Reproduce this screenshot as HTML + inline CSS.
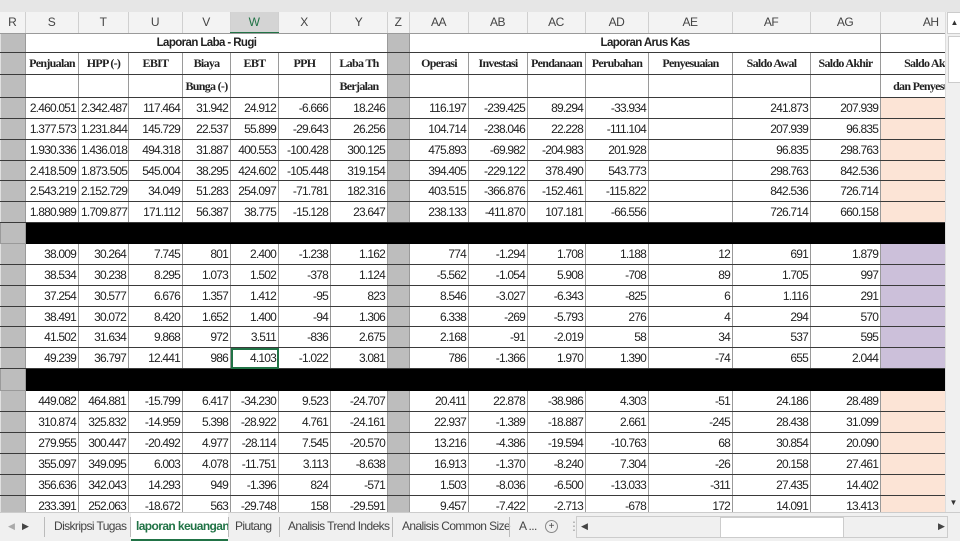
<!DOCTYPE html>
<html><head><meta charset="utf-8"><style>
body{margin:0;width:960px;height:540px;overflow:hidden;background:#e6e6e6;position:relative;font-family:"Liberation Sans",sans-serif}
table{border-collapse:collapse;table-layout:fixed;position:absolute;left:0;width:945px}
td{padding:0 2px;overflow:hidden;white-space:nowrap;font-size:12px;letter-spacing:-0.8px;color:#222}
#ch{top:12px}
#ch td{height:20px;background:#f3f3f3;text-align:center;border-right:1px solid #d0d0d0;border-bottom:1px solid #bbb;color:#444;font-size:12px;letter-spacing:-0.5px}
#ch td.sel{background:#d4d4d4;border-bottom:2px solid #217346;color:#217346}
#dt{top:33px}
#dt td{border:1px solid #9a9a9a;border-bottom:1px solid #3a3a3a;text-align:right;background:#fff}
#dt td.g{background:#bdbdbd;border-left:1px solid #e0e0e0}
#dt tr.h td{font-family:"Liberation Serif",serif;font-weight:bold;font-size:12px;text-align:center;letter-spacing:-0.7px}
#dt tr.t td{font-family:"Liberation Sans",sans-serif;font-size:11.5px;font-weight:bold;letter-spacing:-0.6px}
#dt tr.blk td{background:#000;border-color:#000}
#dt tr.blk td.g{background:#bdbdbd;border-color:#9a9a9a}
#dt td.p{background:#fce4d6}
#dt td.l{background:#ccc0da}
#dt td.s{outline:2px solid #217346;outline-offset:-2px}
#vs{position:absolute;left:945px;top:12px;width:15px;height:500px;background:#f0f0f0;border-left:1px solid #ddd}
#tabs{position:absolute;left:0;top:512px;width:960px;height:28px;background:#f0f0f0;border-top:1px solid #ccc;font-size:12px;letter-spacing:-0.6px;color:#444}
#tabs span{position:absolute;top:6px}
.sep{position:absolute;top:4px;width:1px;height:20px;background:#bbb}
</style></head><body>
<table id="ch"><colgroup><col style="width:25px"><col style="width:53px"><col style="width:50px"><col style="width:54px"><col style="width:48px"><col style="width:48px"><col style="width:52px"><col style="width:57px"><col style="width:22px"><col style="width:59px"><col style="width:59px"><col style="width:58px"><col style="width:63px"><col style="width:84px"><col style="width:78px"><col style="width:70px"><col style="width:65px"></colgroup>
<tr><td>R</td><td>S</td><td>T</td><td>U</td><td>V</td><td class="sel">W</td><td>X</td><td>Y</td><td>Z</td><td>AA</td><td>AB</td><td>AC</td><td>AD</td><td>AE</td><td>AF</td><td>AG</td><td style="text-align:right;padding-right:6px">AH</td></tr></table>
<table id="dt"><colgroup><col style="width:25px"><col style="width:53px"><col style="width:50px"><col style="width:54px"><col style="width:48px"><col style="width:48px"><col style="width:52px"><col style="width:57px"><col style="width:22px"><col style="width:59px"><col style="width:59px"><col style="width:58px"><col style="width:63px"><col style="width:84px"><col style="width:78px"><col style="width:70px"><col style="width:65px"></colgroup>
<tr class="h t" style="height:19px"><td class="g"></td><td colspan="7">Laporan Laba - Rugi</td><td class="g"></td><td colspan="7">Laporan Arus Kas</td><td></td></tr>
<tr class="h" style="height:22px"><td class="g"></td><td>Penjualan</td><td>HPP (-)</td><td>EBIT</td><td>Biaya</td><td>EBT</td><td>PPH</td><td>Laba Th</td><td class="g"></td><td>Operasi</td><td>Investasi</td><td>Pendanaan</td><td>Perubahan</td><td>Penyesuaian</td><td>Saldo Awal</td><td>Saldo Akhir</td><td style="text-align:left;padding-left:23px">Saldo Akhir</td></tr>
<tr class="h" style="height:23px"><td class="g"></td><td></td><td></td><td></td><td>Bunga (-)</td><td></td><td></td><td>Berjalan</td><td class="g"></td><td></td><td></td><td></td><td></td><td></td><td></td><td></td><td style="text-align:left;padding-left:12px">dan Penyesuaian</td></tr>
<tr style="height:21px"><td class="g"></td><td>2.460.051</td><td>2.342.487</td><td>117.464</td><td>31.942</td><td>24.912</td><td>-6.666</td><td>18.246</td><td class="g"></td><td>116.197</td><td>-239.425</td><td>89.294</td><td>-33.934</td><td></td><td>241.873</td><td>207.939</td><td class="p"></td></tr>
<tr style="height:21px"><td class="g"></td><td>1.377.573</td><td>1.231.844</td><td>145.729</td><td>22.537</td><td>55.899</td><td>-29.643</td><td>26.256</td><td class="g"></td><td>104.714</td><td>-238.046</td><td>22.228</td><td>-111.104</td><td></td><td>207.939</td><td>96.835</td><td class="p"></td></tr>
<tr style="height:21px"><td class="g"></td><td>1.930.336</td><td>1.436.018</td><td>494.318</td><td>31.887</td><td>400.553</td><td>-100.428</td><td>300.125</td><td class="g"></td><td>475.893</td><td>-69.982</td><td>-204.983</td><td>201.928</td><td></td><td>96.835</td><td>298.763</td><td class="p"></td></tr>
<tr style="height:20px"><td class="g"></td><td>2.418.509</td><td>1.873.505</td><td>545.004</td><td>38.295</td><td>424.602</td><td>-105.448</td><td>319.154</td><td class="g"></td><td>394.405</td><td>-229.122</td><td>378.490</td><td>543.773</td><td></td><td>298.763</td><td>842.536</td><td class="p"></td></tr>
<tr style="height:21px"><td class="g"></td><td>2.543.219</td><td>2.152.729</td><td>34.049</td><td>51.283</td><td>254.097</td><td>-71.781</td><td>182.316</td><td class="g"></td><td>403.515</td><td>-366.876</td><td>-152.461</td><td>-115.822</td><td></td><td>842.536</td><td>726.714</td><td class="p"></td></tr>
<tr style="height:21px"><td class="g"></td><td>1.880.989</td><td>1.709.877</td><td>171.112</td><td>56.387</td><td>38.775</td><td>-15.128</td><td>23.647</td><td class="g"></td><td>238.133</td><td>-411.870</td><td>107.181</td><td>-66.556</td><td></td><td>726.714</td><td>660.158</td><td class="p"></td></tr>
<tr class="blk" style="height:21px"><td class="g"></td><td colspan="16"></td></tr>
<tr style="height:21px"><td class="g"></td><td>38.009</td><td>30.264</td><td>7.745</td><td>801</td><td>2.400</td><td>-1.238</td><td>1.162</td><td class="g"></td><td>774</td><td>-1.294</td><td>1.708</td><td>1.188</td><td>12</td><td>691</td><td>1.879</td><td class="l"></td></tr>
<tr style="height:21px"><td class="g"></td><td>38.534</td><td>30.238</td><td>8.295</td><td>1.073</td><td>1.502</td><td>-378</td><td>1.124</td><td class="g"></td><td>-5.562</td><td>-1.054</td><td>5.908</td><td>-708</td><td>89</td><td>1.705</td><td>997</td><td class="l"></td></tr>
<tr style="height:21px"><td class="g"></td><td>37.254</td><td>30.577</td><td>6.676</td><td>1.357</td><td>1.412</td><td>-95</td><td>823</td><td class="g"></td><td>8.546</td><td>-3.027</td><td>-6.343</td><td>-825</td><td>6</td><td>1.116</td><td>291</td><td class="l"></td></tr>
<tr style="height:20px"><td class="g"></td><td>38.491</td><td>30.072</td><td>8.420</td><td>1.652</td><td>1.400</td><td>-94</td><td>1.306</td><td class="g"></td><td>6.338</td><td>-269</td><td>-5.793</td><td>276</td><td>4</td><td>294</td><td>570</td><td class="l"></td></tr>
<tr style="height:21px"><td class="g"></td><td>41.502</td><td>31.634</td><td>9.868</td><td>972</td><td>3.511</td><td>-836</td><td>2.675</td><td class="g"></td><td>2.168</td><td>-91</td><td>-2.019</td><td>58</td><td>34</td><td>537</td><td>595</td><td class="l"></td></tr>
<tr style="height:21px"><td class="g"></td><td>49.239</td><td>36.797</td><td>12.441</td><td>986</td><td class="s">4.103</td><td>-1.022</td><td>3.081</td><td class="g"></td><td>786</td><td>-1.366</td><td>1.970</td><td>1.390</td><td>-74</td><td>655</td><td>2.044</td><td class="l"></td></tr>
<tr class="blk" style="height:22px"><td class="g"></td><td colspan="16"></td></tr>
<tr style="height:21px"><td class="g"></td><td>449.082</td><td>464.881</td><td>-15.799</td><td>6.417</td><td>-34.230</td><td>9.523</td><td>-24.707</td><td class="g"></td><td>20.411</td><td>22.878</td><td>-38.986</td><td>4.303</td><td>-51</td><td>24.186</td><td>28.489</td><td class="p"></td></tr>
<tr style="height:21px"><td class="g"></td><td>310.874</td><td>325.832</td><td>-14.959</td><td>5.398</td><td>-28.922</td><td>4.761</td><td>-24.161</td><td class="g"></td><td>22.937</td><td>-1.389</td><td>-18.887</td><td>2.661</td><td>-245</td><td>28.438</td><td>31.099</td><td class="p"></td></tr>
<tr style="height:21px"><td class="g"></td><td>279.955</td><td>300.447</td><td>-20.492</td><td>4.977</td><td>-28.114</td><td>7.545</td><td>-20.570</td><td class="g"></td><td>13.216</td><td>-4.386</td><td>-19.594</td><td>-10.763</td><td>68</td><td>30.854</td><td>20.090</td><td class="p"></td></tr>
<tr style="height:21px"><td class="g"></td><td>355.097</td><td>349.095</td><td>6.003</td><td>4.078</td><td>-11.751</td><td>3.113</td><td>-8.638</td><td class="g"></td><td>16.913</td><td>-1.370</td><td>-8.240</td><td>7.304</td><td>-26</td><td>20.158</td><td>27.461</td><td class="p"></td></tr>
<tr style="height:21px"><td class="g"></td><td>356.636</td><td>342.043</td><td>14.293</td><td>949</td><td>-1.396</td><td>824</td><td>-571</td><td class="g"></td><td>1.503</td><td>-8.036</td><td>-6.500</td><td>-13.033</td><td>-311</td><td>27.435</td><td>14.402</td><td class="p"></td></tr>
<tr style="height:21px"><td class="g"></td><td>233.391</td><td>252.063</td><td>-18.672</td><td>563</td><td>-29.748</td><td>158</td><td>-29.591</td><td class="g"></td><td>9.457</td><td>-7.422</td><td>-2.713</td><td>-678</td><td>172</td><td>14.091</td><td>13.413</td><td class="p"></td></tr>
</table>
<div id="vs"><div style="position:absolute;left:1px;top:0;width:13px;height:20px;background:#fff;border:1px solid #ccc;font-size:8px;text-align:center;line-height:20px;color:#333">▲</div><div style="position:absolute;left:2px;top:24px;width:11px;height:45px;background:#fff;border:1px solid #ccc"></div><div style="position:absolute;left:1px;top:486px;width:13px;height:14px;font-size:8px;text-align:center;color:#333">▼</div></div>
<div id="tabs">
<span style="left:8px;color:#aaa;font-size:9px;top:8px">◀</span><span style="left:22px;font-size:9px;top:8px">▶</span>
<div class="sep" style="left:44px"></div>
<span style="left:54px">Diskripsi Tugas</span>
<div class="sep" style="left:130px"></div>
<div style="position:absolute;left:131px;top:0;width:97px;height:26px;background:#fff;border-bottom:2px solid #217346"></div>
<span style="left:136px;color:#217346;font-weight:bold">laporan keuangan</span>
<div class="sep" style="left:228px"></div>
<span style="left:235px">Piutang</span>
<div class="sep" style="left:279px"></div>
<span style="left:288px">Analisis Trend Indeks</span>
<div class="sep" style="left:392px"></div>
<span style="left:402px">Analisis Common Size</span>
<div class="sep" style="left:509px"></div>
<span style="left:519px">A ...</span>
<span style="left:545px;width:11px;height:11px;border:1px solid #888;border-radius:50%;font-size:10px;line-height:11px;text-align:center;top:7px;letter-spacing:0">+</span>
<span style="left:568px;color:#999">⋮</span>
<div style="position:absolute;left:576px;top:3px;width:370px;height:20px;background:#f0f0f0;border:1px solid #ccc"></div>
<span style="left:581px;font-size:9px;top:8px">◀</span>
<div style="position:absolute;left:720px;top:4px;width:122px;height:19px;background:#fff;border:1px solid #ccc"></div>
<span style="left:938px;font-size:9px;top:8px">▶</span>
</div>
</body></html>
